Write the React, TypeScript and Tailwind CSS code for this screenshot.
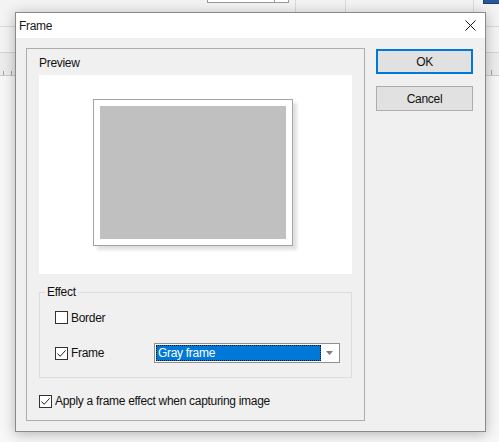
import React from 'react';

const font = { fontFamily: '"Liberation Sans", Arial, sans-serif' };

const CheckBox: React.FC<{ checked?: boolean }> = ({ checked }) => (
  <div className="w-[13px] h-[13px] border border-[#333333] bg-white flex items-center justify-center shrink-0">
    {checked && (
      <svg width="11" height="11" viewBox="0 0 11 11">
        <path d="M1.5 5.5 L4.2 8.3 L9.6 2.4" fill="none" stroke="#222" strokeWidth="1" />
      </svg>
    )}
  </div>
);

const Button: React.FC<{ label: string; primary?: boolean }> = ({ label, primary }) => (
  <button
    className={
      primary
        ? 'w-[97px] h-[25px] bg-[#e1e1e1] border-2 border-[#0078d7] text-[12px] tracking-[-0.3px] text-[#111]'
        : 'w-[97px] h-[25px] bg-[#e1e1e1] border border-[#adadad] text-[12px] tracking-[-0.3px] text-[#111]'
    }
  >
    {label}
  </button>
);

const App: React.FC = () => {
  return (
    <div className="relative w-[499px] h-[442px] overflow-hidden bg-[#f3f3f3] tracking-[-0.3px]" style={font}>
      {/* app behind the dialog */}
      <div className="absolute left-0 top-[26px] w-[499px] h-px bg-[#d9d9d9]" />
      <div className="absolute left-0 top-[52px] w-[499px] h-px bg-[#d4d4d4]" />
      <div className="absolute left-0 top-[53px] w-[499px] h-[22px] bg-[#ececec]" />
      <div className="absolute left-0 top-[75px] w-[499px] h-px bg-[#c8c8c8]" />
      <div className="absolute left-0 top-[76px] w-[499px] h-[366px] bg-[#f7f7f7]" />
      <div className="absolute left-[3px] top-[71px] w-px h-[4px] bg-[#a0a0a0]" />
      <div className="absolute left-[11px] top-[71px] w-px h-[4px] bg-[#a0a0a0]" />
      <div className="absolute left-[491px] top-[70px] w-px h-[5px] bg-[#a0a0a0]" />
      <div className="absolute left-[207px] top-[-1px] w-[82px] h-[4px] border border-[#9a9a9a] bg-white" />
      <div className="absolute left-[274px] top-0 w-px h-[3px] bg-[#9a9a9a]" />
      <div className="absolute left-[295px] top-0 w-px h-[12px] bg-[#dadada]" />
      <div className="absolute left-[345px] top-0 w-px h-[12px] bg-[#dadada]" />
      <div className="absolute left-[473px] top-0 w-px h-[12px] bg-[#dadada]" />
      <div className="absolute left-[483px] top-[-1px] w-[17px] h-[5px] bg-[#2b579a] border border-[#1e3f73]" />

      {/* dialog */}
      <div className="absolute left-[15px] top-[12px] w-[471px] h-[420px] flex flex-col bg-[#f0f0f0] border border-[#8a8a8a] shadow-[0_2px_12px_rgba(0,0,0,0.28)]">
        <div className="h-[25px] bg-white flex items-center justify-between pl-[3px] pr-[9px] shrink-0">
          <span className="text-[12px] text-[#1a1a1a]">Frame</span>
          <svg width="11" height="11" viewBox="0 0 11 11">
            <path d="M0.5 0.5 L10.5 10.5 M10.5 0.5 L0.5 10.5" stroke="#111" strokeWidth="1" />
          </svg>
        </div>

        <div className="flex gap-[11px] pl-[10px] pt-[10px]">
          {/* left group */}
          <div className="w-[339px] h-[373px] border border-[#adadad] px-[12px] flex flex-col">
            <div className="pt-[6px] h-[26px] text-[12px] leading-[16px] text-[#111]">Preview</div>
            <div className="w-[313px] h-[199px] bg-white flex items-center justify-center pr-[6px] pb-[5px]">
              <div className="w-[200px] h-[147px] border border-[#a3a3a3] bg-white p-[6px] shadow-[4px_4px_3px_rgba(0,0,0,0.12)]">
                <div className="w-full h-full bg-[#c0c0c0]" />
              </div>
            </div>

            <fieldset className="mt-[10px] w-[313px] h-[94px] border border-[#dcdcdc]">
              <legend className="ml-[5px] px-[2px] text-[12px] leading-[16px] text-[#111]">Effect</legend>
              <div className="pl-[15px]">
                <div className="flex items-center gap-[3px] h-[13px] mt-[11px]">
                  <CheckBox />
                  <span className="text-[12px] text-[#111]">Border</span>
                </div>
                <div className="flex items-center h-[20px] mt-[19px]">
                  <div className="w-[99px] flex items-center gap-[3px]">
                    <CheckBox checked />
                    <span className="text-[12px] text-[#111]">Frame</span>
                  </div>
                  <div className="w-[186px] h-[20px] border border-[#8f8f8f] bg-white flex items-stretch p-px">
                    <div className="flex-1 bg-[#0078d7] border border-dotted border-[#111] flex items-center pl-[1px] text-[12px] text-white">
                      Gray frame
                    </div>
                    <div className="w-[17px] flex items-center justify-center">
                      <svg width="7" height="4" viewBox="0 0 7 4">
                        <path d="M0 0 L7 0 L3.5 4 Z" fill="#7a7a7a" />
                      </svg>
                    </div>
                  </div>
                </div>
              </div>
            </fieldset>

            <div className="flex items-center gap-[3px] mt-[14px]">
              <CheckBox checked />
              <span className="text-[12px] text-[#111]">Apply a frame effect when capturing image</span>
            </div>
          </div>

          {/* buttons */}
          <div className="flex flex-col gap-[12px] pt-px">
            <Button label="OK" primary />
            <Button label="Cancel" />
          </div>
        </div>
      </div>
    </div>
  );
};

export default App;
